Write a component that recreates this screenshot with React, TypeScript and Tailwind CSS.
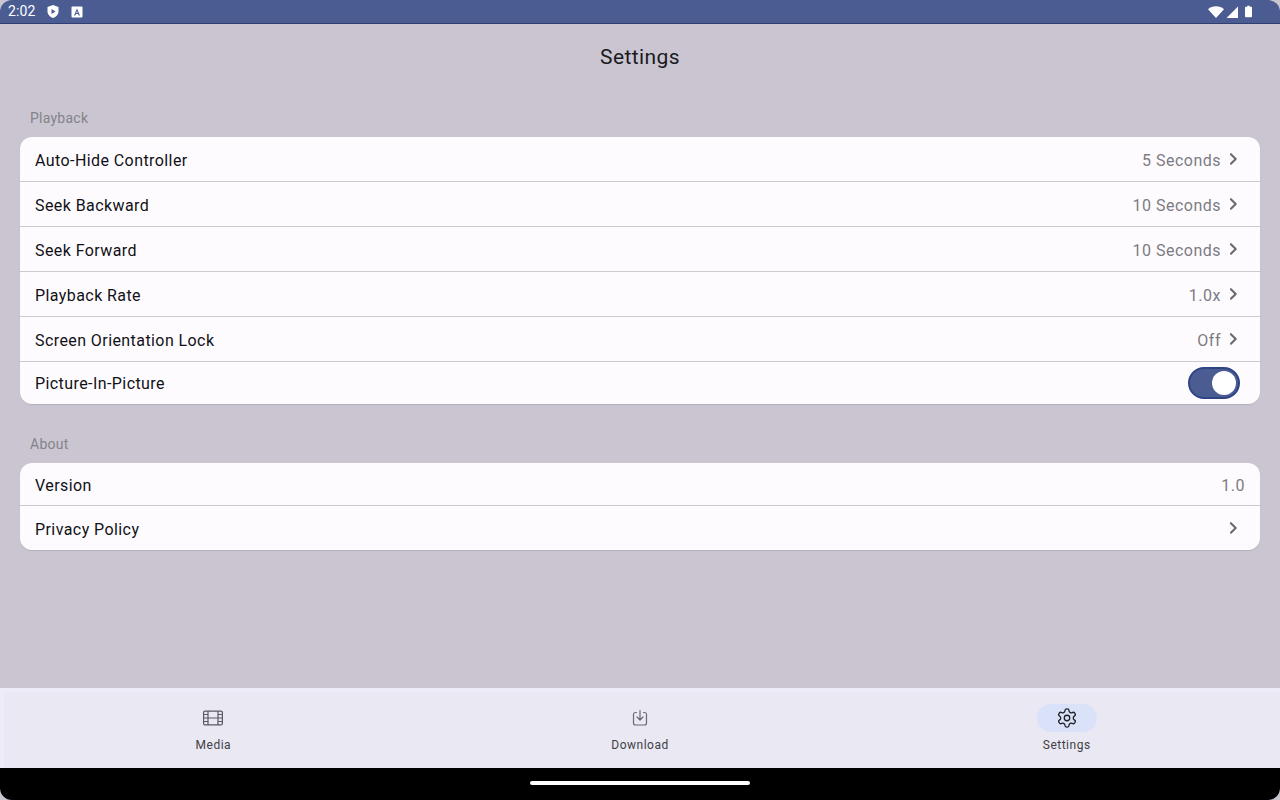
import React from "react";

const font = { fontFamily: "Roboto, sans-serif" };

function Chevron() {
  return (
    <svg width="24" height="24" viewBox="0 0 24 24" className="shrink-0" fill="#6a6a70">
      <path d="M9.3 6.7a1 1 0 0 1 1.4 0l4.6 4.6a1 1 0 0 1 0 1.4l-4.6 4.6a1 1 0 0 1-1.4-1.4l3.9-3.9-3.9-3.9a1 1 0 0 1 0-1.4z" transform="translate(12 12) scale(1.05) translate(-12 -12)" />
    </svg>
  );
}

function Row({ label, value, chevron = true, h = "h-[45px]", labelOffset = "mt-[4px]", children }: { label: string; value?: string; chevron?: boolean; h?: string; labelOffset?: string; children?: React.ReactNode }) {
  return (
    <div className={`flex items-center justify-between pl-[15px] pr-[15px] ${h} border-b border-[#cdc9d3] last:border-b-0`}>
      <span className={`${labelOffset} text-[16px] tracking-[0.42px] text-[#111115]`}>{label}</span>
      <div className="flex items-center">
        {value && <span className="mt-[4px] text-[16px] tracking-[0.5px] text-[#7c7b81]">{value}</span>}
        {chevron && <Chevron />}
        {children}
      </div>
    </div>
  );
}

function Tab({ label, active, children }: { label: string; active?: boolean; children: React.ReactNode }) {
  return (
    <div className="flex-1 flex flex-col items-center pt-4">
      <div className={`w-[60px] h-[28px] rounded-full flex items-center justify-center ${active ? "bg-[#dae2f9]" : ""}`}>{children}</div>
      <span className="mt-[4px] pt-[1px] text-[12px] leading-[16px] tracking-[0.5px] text-[#3f3f45]">{label}</span>
    </div>
  );
}

export default function App() {
  return (
    <div style={font} className="w-[1280px] h-[800px] flex flex-col overflow-hidden bg-[#cac5d0] relative">
      <div className="h-6 shrink-0 bg-[#4a5c92] border-b border-[#2f3f70] flex items-center justify-between pl-2 pr-[28px] text-white rounded-t-[12px]">
        <div className="flex items-center">
          <span className="text-[14px] tracking-[0.1px]">2:02</span>
          <svg width="14" height="15" viewBox="0 0 14 14" className="ml-[11px]">
            <path d="M7 0.5 L12.5 2.5 V7 C12.5 10 10 12.5 7 13.5 C4 12.5 1.5 10 1.5 7 V2.5 Z" fill="#fff" />
            <path d="M5.5 4.5 L9.5 7 L5.5 9.5 Z" fill="#4a5c92" />
          </svg>
          <svg width="12" height="12" viewBox="0 0 12 12" className="ml-[11px]">
            <rect x="0.5" y="0.5" width="11" height="11" rx="1" fill="#fff" />
            <path d="M6 2.5 L3 9.5 H4.3 L4.9 8 H7.1 L7.7 9.5 H9 L6 2.5 Z M5.3 7 L6 5 L6.7 7 Z" fill="#4a5c92" />
          </svg>
        </div>
        <div className="flex items-center">
          <svg width="16" height="12" viewBox="0 0 16 12">
            <path d="M0 3.2 C4.4 -0.6 11.6 -0.6 16 3.2 L8 12 Z" fill="#fff" />
          </svg>
          <svg width="12" height="12" viewBox="0 0 12 12" className="ml-[2px]">
            <path d="M12 0.5 V12 H0.5 Z" fill="#fff" />
          </svg>
          <svg width="7" height="13" viewBox="0 0 8 13" className="ml-[7px]">
            <path d="M2.5 0 H5.5 V1.2 H7 C7.5 1.2 8 1.6 8 2.2 V12 C8 12.6 7.5 13 7 13 H1 C0.5 13 0 12.6 0 12 V2.2 C0 1.6 0.5 1.2 1 1.2 H2.5 Z" fill="#fff" />
          </svg>
        </div>
      </div>

      <div className="flex-1 flex flex-col min-h-0">
        <div className="h-[66px] pt-[2px] flex items-center justify-center text-[21px] tracking-[0.4px] text-[#1b1b1f]">Settings</div>

        <section className="px-5">
          <div className="pl-[10px] mt-[19px] h-[18px] leading-[18px] text-[14px] tracking-[0.25px] text-[#85838a] mb-[10px]">Playback</div>
          <div className="bg-[#fefbff] rounded-[12px] shadow-[0_1px_1px_rgba(0,0,0,0.1)] overflow-hidden">
            <Row label="Auto-Hide Controller" value="5 Seconds" />
            <Row label="Seek Backward" value="10 Seconds" />
            <Row label="Seek Forward" value="10 Seconds" />
            <Row label="Playback Rate" value="1.0x" />
            <Row label="Screen Orientation Lock" value="Off" />
            <Row label="Picture-In-Picture" chevron={false} h="h-[42px]" labelOffset="mt-[2px]">
              <div className="w-[52px] h-[32px] rounded-full bg-[#4a5c92] border-2 border-[#2f4485] flex items-center justify-end pr-[2px] mr-[5px]">
                <div className="w-6 h-6 rounded-full bg-white" />
              </div>
            </Row>
          </div>

          <div className="pl-[10px] mt-[31px] h-[18px] leading-[18px] text-[14px] tracking-[0.25px] text-[#85838a] mb-[10px]">About</div>
          <div className="bg-[#fefbff] rounded-[12px] shadow-[0_1px_1px_rgba(0,0,0,0.1)] overflow-hidden">
            <Row label="Version" value="1.0" chevron={false} h="h-[43px]" />
            <Row label="Privacy Policy" h="h-[44px]" />
          </div>
        </section>
      </div>

      <div className="h-[80px] shrink-0 bg-[#e9e8f3] shadow-[inset_4px_4px_0_#eeecf8] flex">
        <Tab label="Media">
          <svg width="22" height="22" viewBox="0 0 22 22" fill="none" stroke="#5a5a61" strokeWidth="1.2">
            <rect x="1.6" y="4.1" width="18.8" height="13.8" rx="1.5" />
            <path d="M6 4.1V17.9M16 4.1V17.9M6 11H16M1.6 7.5H6M1.6 11H6M1.6 14.5H6M16 7.5H20.4M16 11H20.4M16 14.5H20.4" />
          </svg>
        </Tab>
        <Tab label="Download">
          <svg width="20" height="20" viewBox="0 0 20 20" fill="none" stroke="#6a6a71" strokeWidth="1.2" strokeLinecap="round" strokeLinejoin="round">
            <path d="M6.5 4.5H5.5C4.4 4.5 3.5 5.4 3.5 6.5V15C3.5 16.1 4.4 17 5.5 17H14.5C15.6 17 16.5 16.1 16.5 15V6.5C16.5 5.4 15.6 4.5 14.5 4.5H13.5" />
            <path d="M10 2.5V11.5M7 9L10 12L13 9" />
          </svg>
        </Tab>
        <Tab label="Settings" active>
          <svg width="22" height="22" viewBox="0 0 24 24" fill="none" stroke="#1f1f24" strokeWidth="1.4" strokeLinecap="round" strokeLinejoin="round">
            <path d="M12.22 2h-.44a2 2 0 0 0-2 2v.18a2 2 0 0 1-1 1.73l-.43.25a2 2 0 0 1-2 0l-.15-.08a2 2 0 0 0-2.73.73l-.22.38a2 2 0 0 0 .73 2.73l.15.1a2 2 0 0 1 1 1.72v.51a2 2 0 0 1-1 1.74l-.15.09a2 2 0 0 0-.73 2.73l.22.38a2 2 0 0 0 2.73.73l.15-.08a2 2 0 0 1 2 0l.43.25a2 2 0 0 1 1 1.73V20a2 2 0 0 0 2 2h.44a2 2 0 0 0 2-2v-.18a2 2 0 0 1 1-1.73l.43-.25a2 2 0 0 1 2 0l.15.08a2 2 0 0 0 2.73-.73l.22-.39a2 2 0 0 0-.73-2.73l-.15-.08a2 2 0 0 1-1-1.74v-.5a2 2 0 0 1 1-1.74l.15-.09a2 2 0 0 0 .73-2.73l-.22-.38a2 2 0 0 0-2.73-.73l-.15.08a2 2 0 0 1-2 0l-.43-.25a2 2 0 0 1-1-1.73V4a2 2 0 0 0-2-2z" />
            <circle cx="12" cy="12" r="3" />
          </svg>
        </Tab>
      </div>

      <div className="h-8 shrink-0 bg-black flex items-center justify-center rounded-b-[12px]">
        <div className="w-[220px] h-[4px] rounded-full bg-white mt-[-2px]" />
      </div>
    </div>
  );
}
